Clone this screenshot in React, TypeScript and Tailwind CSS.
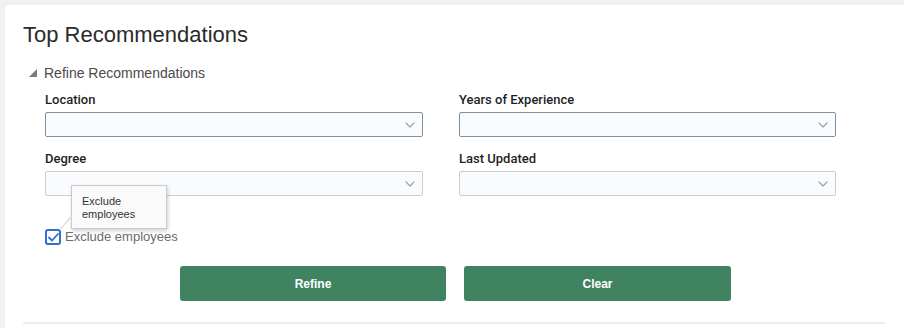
import React from "react";

function Chevron() {
  return (
    <svg width="10" height="6" viewBox="0 0 10 6" fill="none" className="shrink-0">
      <path d="M1 1l4 4 4-4" stroke="#9aa3ab" strokeWidth="1.2" strokeLinecap="round" strokeLinejoin="round" />
    </svg>
  );
}

function SelectField({ label, dark }: { label: string; dark?: boolean }) {
  return (
    <div className="flex flex-col">
      <label className="text-[13px] leading-4 font-medium text-[#1f1f1f] font-['Roboto',sans-serif]">{label}</label>
      <div
        className={
          dark
            ? "mt-[4px] h-[25px] border border-[#7f919f] rounded-[2px] bg-[#fafbfd] flex items-center justify-end pr-[7px]"
            : "mt-[4px] h-[25px] border border-[#c9ced3] rounded-[2px] bg-[#fafbfd] flex items-center justify-end pr-[7px]"
        }
      >
        <Chevron />
      </div>
    </div>
  );
}

export default function App() {
  return (
    <div className="w-[904px] h-[328px] overflow-hidden bg-[#f1f1f0] pl-[5px] pt-[5px] font-['Liberation_Sans',Arial,sans-serif]">
      <div className="h-full bg-white rounded-tl-[4px] pl-[18px] pr-[19px] pt-[16px] flex flex-col">
        <h1 className="text-[22px] leading-7 text-[#2b2b2b]">Top Recommendations</h1>

        <div className="mt-[14px] h-5 flex items-center pl-[6px] gap-[7px]">
          <svg width="8" height="8" viewBox="0 0 8 8">
            <path d="M8 0L8 8L0 8Z" fill="#7b7b7b" />
          </svg>
          <span className="text-[14px] text-[#4a4a4a]">Refine Recommendations</span>
        </div>

        <div className="mt-[9px] pl-[22px] grid grid-cols-[378px_377px] gap-x-[36px] gap-y-[14px]">
          <SelectField label="Location" dark />
          <SelectField label="Years of Experience" dark />
          <SelectField label="Degree" />
          <SelectField label="Last Updated" />
        </div>

        <div className="relative mt-[33px] pl-[22px] flex items-center gap-[4px] h-4">
          <div className="w-4 h-4 border-2 border-[#2f6fd0] rounded-[3px] bg-white flex items-center justify-center">
            <svg width="11" height="9" viewBox="0 0 11 9" fill="none">
              <path d="M1 4.5l3 3L10 1" stroke="#2f6fd0" strokeWidth="1.8" strokeLinecap="round" strokeLinejoin="round" />
            </svg>
          </div>
          <span className="text-[13px] text-[#6b6b6b]">Exclude employees</span>

          <div className="absolute left-[48px] top-[-44px] w-[96px] h-[44px] bg-[#fafafa] border border-[#c5cbd1] shadow-[1px_2px_4px_rgba(0,0,0,0.18)] pl-[10px] pt-[9px] text-[11px] leading-[13px] text-[#333]">
            Exclude
            <br />
            employees
          </div>
          <svg className="absolute left-[37px] top-[-13px]" width="16" height="14" viewBox="0 0 16 14">
            <path d="M12 0.5L0.5 13L11 0.5" fill="#fafafa" stroke="#cfd5da" strokeWidth="1" />
          </svg>
        </div>

        <div className="mt-[21px] flex gap-[18px] pl-[157px]">
          <button className="w-[266px] h-[35px] rounded-[3px] bg-[#3f8360] text-white text-[12px] font-semibold">
            Refine
          </button>
          <button className="w-[267px] h-[35px] rounded-[3px] bg-[#3f8360] text-white text-[12px] font-semibold">
            Clear
          </button>
        </div>

        <div className="mt-[21px] h-[2px] bg-[#e6eef2]" />
      </div>
    </div>
  );
}
